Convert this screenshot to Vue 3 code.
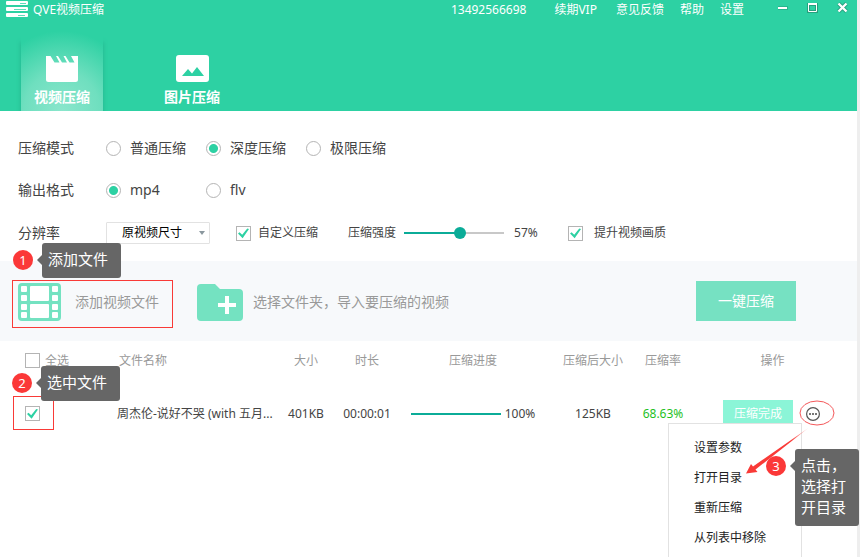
<script setup>
import { ref } from 'vue'

const modes = ['普通压缩', '深度压缩', '极限压缩']
const formats = ['mp4', 'flv']
const mode = ref('深度压缩')
const format = ref('mp4')
const size = ref('原视频尺寸')
const custom = ref(true)
const enhance = ref(true)
const strength = ref(57)
const all = ref(false)

const files = ref([
  {
    name: '周杰伦-说好不哭 (with 五月...',
    size: '401KB',
    time: '00:00:01',
    progress: 100,
    after: '125KB',
    ratio: '68.63%',
    checked: true,
  },
])
const actions = ['设置参数', '打开目录', '重新压缩', '从列表中移除']
</script>

<template>
  <div class="window">
    <header class="header">
      <div class="topbar">
        <svg class="logo" viewBox="0 0 22 17" width="22" height="17" aria-hidden="true">
          <rect x="0" y="1" width="22" height="4" rx="1" fill="#fff" />
          <rect x="0" y="7" width="22" height="4" rx="1" fill="#fff" />
          <rect x="0" y="13" width="22" height="4" rx="1" fill="#fff" />
          <path d="M14 3.500h6M8 9.500h12M12 15.500h7" stroke="#5fdcb9" />
        </svg>
        <span class="title">QVE视频压缩</span>
        <nav class="links">
          <a class="account" href="#">13492566698</a>
          <a class="vip" href="#">续期VIP</a>
          <a href="#">意见反馈</a>
          <a href="#">帮助</a>
          <a href="#">设置</a>
        </nav>
        <div class="controls">
          <button type="button" aria-label="最小化">
            <svg viewBox="0 0 12 12" width="12" height="12"><path d="M1 6h10" stroke="#27b48d" stroke-width="4" /><path d="M1 6h9" stroke="#fff" stroke-width="2" /></svg>
          </button>
          <button type="button" aria-label="最大化">
            <svg viewBox="0 0 12 12" width="12" height="12"><rect x="1.500" y="2.500" width="8" height="7" fill="none" stroke="#27a07e" stroke-width="3" /><path d="M1.500 2v7.500h8V2" fill="none" stroke="#fff" /><path d="M1 2h9" stroke="#fff" stroke-width="2" /></svg>
          </button>
          <button type="button" aria-label="关闭">
            <svg viewBox="0 0 12 12" width="12" height="12"><path d="M1.500 1.500l8 8M9.500 1.500l-8 8" stroke="#27a07e" stroke-width="4" /><path d="M1.500 1.500l8 8M9.500 1.500l-8 8" stroke="#fff" stroke-width="2.400" /></svg>
          </button>
        </div>
      </div>
      <div class="tabs">
        <button type="button" class="tab active">
          <svg viewBox="0 0 34 28" width="34" height="28" aria-hidden="true">
            <path d="M1 1h4.500l4 6.500h5L11 1h2l4 6.500h5L18.500 1h2l4 6.500h5L26 1h7v23.500q0 2.500-2.500 2.500h-27Q1 27 1 24.500z" fill="#fff" />
          </svg>
          <span>视频压缩</span>
        </button>
        <button type="button" class="tab">
          <svg viewBox="0 0 34 28" width="34" height="28" aria-hidden="true">
            <rect x="1" y="0" width="33" height="27" rx="3" fill="#fff" />
            <path d="M7 21l6-7 4 4.500 5-6.500 7 9z" fill="#2dd1a3" />
          </svg>
          <span>图片压缩</span>
        </button>
      </div>
    </header>

    <section class="settings">
      <div class="row">
        <span class="row-label">压缩模式</span>
        <label v-for="m in modes" :key="m" class="radio">
          <input v-model="mode" type="radio" name="mode" :value="m" />{{ m }}
        </label>
      </div>
      <div class="row">
        <span class="row-label">输出格式</span>
        <label v-for="f in formats" :key="f" class="radio">
          <input v-model="format" type="radio" name="format" :value="f" />{{ f }}
        </label>
      </div>
      <div class="row small">
        <label class="row-label" for="size">分辨率</label>
        <div class="select">
          <select id="size" v-model="size">
            <option>原视频尺寸</option>
          </select>
        </div>
        <label class="check custom"><input v-model="custom" type="checkbox" />自定义压缩</label>
        <label class="strength" for="strength">压缩强度</label>
        <input
          id="strength"
          v-model="strength"
          class="range"
          type="range"
          min="0"
          max="100"
          :style="{ '--fill': strength + '%' }"
        />
        <output class="percent" for="strength">{{ strength }}%</output>
        <label class="check enhance"><input v-model="enhance" type="checkbox" />提升视频画质</label>
      </div>
    </section>

    <section class="import">
      <button type="button" class="add">
        <svg viewBox="0 0 44 38" width="44" height="38" aria-hidden="true">
          <rect width="43" height="38" rx="4" fill="#74e2c1" />
          <g fill="#fff">
            <rect x="12" y="3" width="19" height="15" rx="1" />
            <rect x="12" y="21" width="19" height="14" rx="1" />
            <rect x="3" y="3" width="6" height="6" rx="1" />
            <rect x="3" y="12" width="6" height="6" rx="1" />
            <rect x="3" y="21" width="6" height="6" rx="1" />
            <rect x="3" y="29" width="6" height="6" rx="1" />
            <rect x="34" y="3" width="6" height="6" rx="1" />
            <rect x="34" y="12" width="6" height="6" rx="1" />
            <rect x="34" y="21" width="6" height="6" rx="1" />
            <rect x="34" y="29" width="6" height="6" rx="1" />
          </g>
        </svg>
        添加视频文件
      </button>
      <button type="button" class="add folder">
        <svg viewBox="0 0 46 38" width="46" height="38" aria-hidden="true">
          <path d="M4 1h14l5 5h19q4 0 4 4v24q0 4-4 4H4q-4 0-4-4V5q0-4 4-4z" fill="#74e2c1" />
          <path d="M30 13v18M21 22h18" stroke="#fff" stroke-width="4" />
        </svg>
        选择文件夹，导入要压缩的视频
      </button>
      <button type="button" class="start">一键压缩</button>
    </section>

    <table class="files">
      <colgroup>
        <col class="c-check" />
        <col class="c-name" />
        <col class="c-size" />
        <col class="c-time" />
        <col class="c-progress" />
        <col class="c-after" />
        <col class="c-ratio" />
        <col />
      </colgroup>
      <thead>
        <tr>
          <th class="pick"><label class="check"><input v-model="all" type="checkbox" />全选</label></th>
          <th class="name">文件名称</th>
          <th>大小</th>
          <th>时长</th>
          <th>压缩进度</th>
          <th>压缩后大小</th>
          <th>压缩率</th>
          <th>操作</th>
        </tr>
      </thead>
      <tbody>
        <tr v-for="file in files" :key="file.name">
          <td class="pick">
            <label class="check"><input v-model="file.checked" type="checkbox" :aria-label="file.name" /></label>
          </td>
          <td class="name">{{ file.name }}</td>
          <td>{{ file.size }}</td>
          <td>{{ file.time }}</td>
          <td>
            <div class="progress">
              <div class="track"><div class="bar" :style="{ width: file.progress + '%' }"></div></div>
              {{ file.progress }}%
            </div>
          </td>
          <td>{{ file.after }}</td>
          <td class="ratio">{{ file.ratio }}</td>
          <td>
            <div class="ops">
              <button type="button" class="done">压缩完成</button>
              <button type="button" class="more" aria-label="更多">
                <svg viewBox="0 0 14 14" width="14" height="14">
                  <circle cx="7" cy="7" r="6.400" fill="none" stroke="#555" stroke-width="1.200" />
                  <path d="M3 6h2v2H3zM6 6h2v2H6zM9 6h2v2H9z" fill="#777" />
                </svg>
              </button>
              <ul class="menu">
                <li v-for="a in actions" :key="a"><button type="button">{{ a }}</button></li>
              </ul>
            </div>
          </td>
        </tr>
      </tbody>
    </table>

    <div class="frame frame-add"></div>
    <div class="frame frame-pick"></div>
    <svg class="pointer" viewBox="0 0 100 80" width="100" height="80" aria-hidden="true">
      <defs>
        <linearGradient id="fade" gradientUnits="userSpaceOnUse" x1="69" y1="30" x2="20" y2="64">
          <stop offset="0" stop-color="#f93a37" stop-opacity="0.150" />
          <stop offset="0.350" stop-color="#f93a37" />
        </linearGradient>
      </defs>
      <ellipse cx="77" cy="13" rx="17" ry="12" fill="none" stroke="#f4585a" />
      <path d="M6 73.500L11 64l2 2.500L69 27.500 15.500 69.500l2 2.500z" fill="url(#fade)" />
    </svg>
    <div class="step step-1"><b>1</b><p>添加文件</p></div>
    <div class="step step-2"><b>2</b><p>选中文件</p></div>
    <div class="step step-3"><b>3</b><p>点击，<br />选择打<br />开目录</p></div>
  </div>
</template>

<style>
body {
  background: #eee;
}
</style>

<style scoped>
.window {
  position: relative;
  box-sizing: border-box;
  min-height: 100vh;
  overflow: hidden;
  padding-right: 3px;
  background: #fff;
  box-shadow: inset -3px 0 #eee;
  color: #444;
  font: 12px/18px "Noto Sans", "Noto Sans CJK SC", sans-serif;
}
button {
  padding: 0;
  border: 0;
  background: none;
  color: inherit;
  font: inherit;
  white-space: nowrap;
}
input {
  flex: none;
  margin: 0;
  appearance: none;
}
svg {
  display: block;
  flex: none;
}

.header {
  background: #2dd1a3;
  color: #fff;
}
.topbar {
  display: flex;
  align-items: center;
  height: 20px;
  padding: 0 8px 0 6px;
}
.logo {
  margin-bottom: 3px;
}
.title {
  margin-left: 5px;
}
.links {
  display: flex;
  gap: 16px;
  margin-left: auto;
}
.links a {
  color: inherit;
  text-decoration: none;
}
.links .account {
  margin-right: 12px;
}
.links .vip {
  margin-right: 3px;
}
.controls {
  display: flex;
  gap: 18px;
  margin: 0 0 4px 33px;
}
.tabs {
  display: flex;
  gap: 48px;
  padding: 10px 21px 0;
}
.tab {
  display: flex;
  flex-direction: column;
  align-items: center;
  gap: 6px;
  box-sizing: border-box;
  width: 82px;
  height: 81px;
  padding-top: 25px;
  font-size: 14px;
  font-weight: bold;
  line-height: 16px;
}
.tab.active {
  background: radial-gradient(ellipse 76px 80px at 50% 100%, #8ae6cc 0%, #6fdfbf 50%, #2dd1a3 100%);
  box-shadow: -3px 10px 4px -2px #28bd94, 3px 10px 4px -2px #28bd94;
  clip-path: inset(0 -5px);
}

.settings {
  padding: 16px 18px 8px;
}
.row {
  display: flex;
  align-items: center;
  height: 42px;
  font-size: 14px;
}
.row-label {
  width: 88px;
  font-size: 14px;
}
.radio {
  display: flex;
  align-items: center;
  gap: 9px;
  width: 100px;
}
.radio input {
  width: 15px;
  height: 15px;
  border: 1px solid #b4b4b4;
  border-radius: 50%;
  background: #fff;
}
.radio input:checked {
  background: radial-gradient(circle, #2dd1a3 4px, #fff 5px);
}
.small {
  height: 44px;
  margin-bottom: -2px;
  font-size: 12px;
}
.select {
  position: relative;
}
.select::after {
  content: "";
  position: absolute;
  top: 9px;
  right: 5px;
  border: solid transparent;
  border-width: 4px 3px 0;
  border-top-color: #8a979e;
  pointer-events: none;
}
.select select {
  display: block;
  box-sizing: border-box;
  width: 104px;
  height: 22px;
  padding: 0 0 0 15px;
  border: 1px solid #e2e2e2;
  border-radius: 1px;
  appearance: none;
  background: #fff;
  color: #000;
  font: inherit;
}
.check {
  display: flex;
  align-items: center;
  gap: 5px;
}
.check input {
  display: grid;
  place-items: center;
  box-sizing: border-box;
  width: 15px;
  height: 15px;
  border: 1px solid #b4b4b4;
  background: #fff;
}
.check input:checked::before {
  content: "";
  width: 11px;
  height: 11px;
  background: #2dd1a3;
  clip-path: polygon(0 54%, 14% 44%, 38% 66%, 84% 8%, 100% 14%, 42% 98%);
}
.custom {
  gap: 7px;
  margin-left: 26px;
}
.strength {
  margin-left: 30px;
}
.range {
  width: 100px;
  height: 12px;
  margin-left: 8px;
}
.range::-webkit-slider-runnable-track {
  height: 2px;
  background: linear-gradient(to right, #0bac98 var(--fill), #c8c8c8 var(--fill));
}
.range::-webkit-slider-thumb {
  width: 12px;
  height: 12px;
  margin-top: -5px;
  border-radius: 50%;
  appearance: none;
  background: #0bac98;
}
.percent {
  width: 54px;
  margin-left: 10px;
}
.enhance {
  gap: 11px;
}
.enhance,
.custom {
  white-space: nowrap;
}

.import {
  display: flex;
  align-items: center;
  height: 80px;
  padding: 0 61px 0 18px;
  background: #f7f9fb;
}
.add {
  display: flex;
  align-items: center;
  gap: 13px;
  padding-top: 1px;
  color: #999;
  font-size: 14px;
}
.folder {
  gap: 10px;
  margin-left: 38px;
}
.start {
  width: 100px;
  height: 40px;
  margin-left: auto;
  background: #76e1c2;
  color: #fff;
  font-size: 14px;
}

.files {
  width: 100%;
  table-layout: fixed;
  border-collapse: collapse;
}
.c-check { width: 110px; }
.c-name { width: 166px; }
.c-size { width: 60px; }
.c-time { width: 62px; }
.c-progress { width: 150px; }
.c-after { width: 90px; }
.c-ratio { width: 50px; }
th,
td {
  padding: 0;
  text-align: center;
  white-space: nowrap;
}
th {
  height: 39px;
  color: #999;
  font-weight: normal;
}
td {
  height: 67px;
}
.files .pick {
  padding-left: 25px;
}
.files .name {
  padding-left: 7px;
  text-align: left;
}
th.name {
  text-indent: 2px;
}
.progress {
  display: flex;
  align-items: center;
  justify-content: center;
  gap: 4px;
}
.track {
  width: 90px;
  height: 2px;
  background: #c8c8c8;
}
.bar {
  height: 100%;
  background: #0bac98;
}
.ratio {
  color: #1fc11f;
}
.ops {
  position: relative;
  display: flex;
  align-items: center;
  gap: 13px;
  padding-left: 35px;
}
.done {
  width: 70px;
  height: 28px;
  background: #8bf5d7;
  color: #fff;
}
.menu {
  position: absolute;
  top: 23px;
  left: -20px;
  box-sizing: border-box;
  width: 134px;
  margin: 0;
  padding: 9px 0 8px 25px;
  border: 1px solid #e2e2e2;
  background: #fff;
  color: #222;
  list-style: none;
  text-align: left;
}
.menu button {
  display: block;
  height: 30px;
}

.frame {
  position: absolute;
  box-sizing: border-box;
  border: 1px solid #f93a37;
  pointer-events: none;
}
.frame-add {
  top: 280px;
  left: 12px;
  width: 161px;
  height: 48px;
}
.frame-pick {
  top: 396px;
  left: 13px;
  width: 41px;
  height: 34px;
}
.pointer {
  position: absolute;
  top: 400px;
  left: 740px;
  pointer-events: none;
}
.step {
  position: absolute;
  display: flex;
  align-items: flex-start;
  gap: 9px;
}
.step b {
  width: 20px;
  height: 20px;
  margin-top: 7px;
  border-radius: 50%;
  background: #fb3838;
  color: #fff;
  font-size: 13px;
  font-weight: normal;
  line-height: 20px;
  text-align: center;
}
.step p {
  position: relative;
  margin: 0;
  padding: 6px 13px 8px 6px;
  border-radius: 3px;
  background: #666;
  color: #fff;
  font-size: 15px;
  line-height: 21px;
  white-space: nowrap;
}
.step p::before {
  content: "";
  position: absolute;
  top: 12px;
  left: -5px;
  border: solid transparent;
  border-width: 5px 5px 5px 0;
  border-right-color: #666;
}
.step-1 {
  top: 243px;
  left: 13px;
}
.step-2 {
  top: 366px;
  left: 12px;
}
.step-3 {
  top: 449px;
  left: 766px;
}
</style>
